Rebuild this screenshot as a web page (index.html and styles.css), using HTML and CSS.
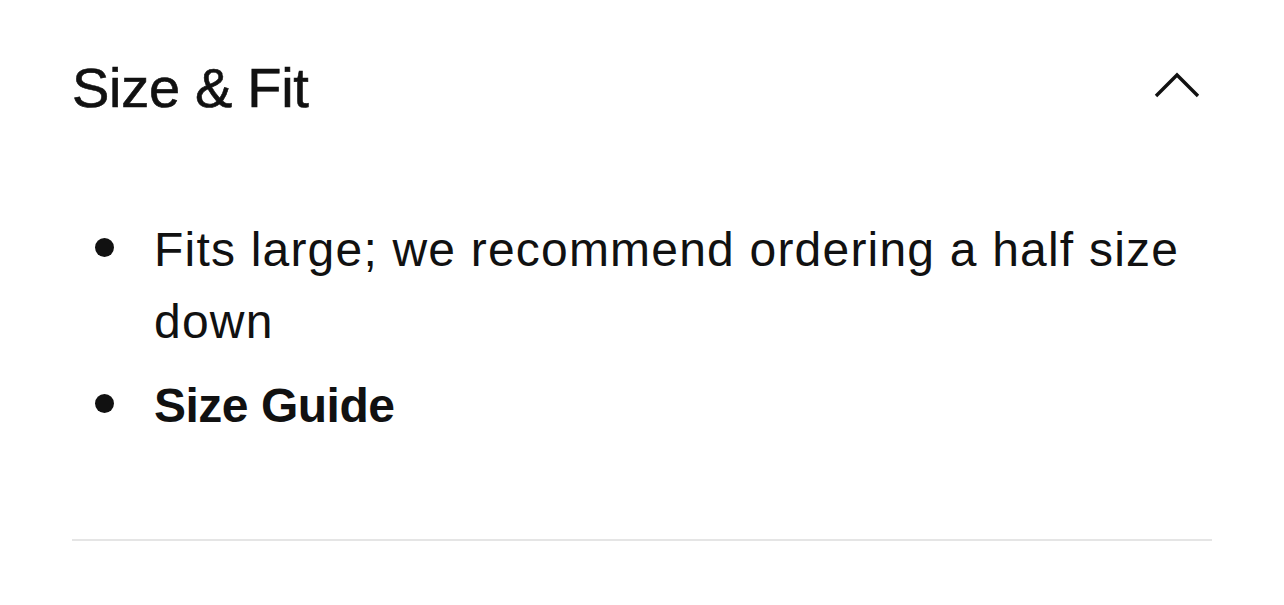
FILE: index.html
```html
<!DOCTYPE html>
<html lang="en">
<head>
    <meta charset="UTF-8">
    <title>Size &amp; Fit</title>
    <link rel="stylesheet" href="styles.css">
</head>
<body>

    <!-- Size & Fit accordion -->
    <div class="panel">
        <div class="panel-header">
            <h2>Size &amp; Fit</h2>
            <button class="toggle" aria-label="Collapse">
                <svg width="46" height="26" viewBox="0 0 46 26">
                    <path d="M2 24 L23 3 L44 24" fill="none" stroke="#111" stroke-width="3.4"/>
                </svg>
            </button>
        </div>

        <ul class="fit-list">
            <li><span class="dot"></span><span>Fits large; we recommend ordering a half size down</span></li>
            <li><span class="dot"></span><a href="#" class="guide">Size Guide</a></li>
        </ul>
    </div>

</body>
</html>
```

FILE: styles.css
```css
body {
    font-family: 'Liberation Sans', Arial, sans-serif;
    background-color: #fff;
    color: #111;
    margin: 0;
    padding: 0;
}

.panel {
    margin: 0 72px;
    padding-top: 60px;
    border-bottom: 2px solid #e5e5e5;
}

.panel-header {
    display: flex;
    justify-content: space-between;
    align-items: center;
}

h2 {
    margin: 0;
    font-size: 56px;
    font-weight: normal;
    line-height: 56px;
    letter-spacing: -0.3px;
    -webkit-text-stroke: 0.6px #111; /* a little heavier, like a medium cut */
}

.toggle {
    background: none;
    border: none;
    padding: 0;
    margin: 0 12px 6px 0;
    cursor: pointer;
    display: flex;
}

.fit-list {
    list-style: none;
    margin: 98px 0 0;
    padding: 0 0 97px;
}

.fit-list li {
    display: flex;
    font-size: 48px;
    line-height: 72px;
    letter-spacing: 1.2px;
}

.fit-list li + li {
    margin-top: 12px;
}

.dot {
    flex: none;
    width: 19px;
    height: 19px;
    border-radius: 50%;
    background-color: #111;
    margin: 24px 40px 0 23px;
}

.guide {
    color: #111;
    font-weight: bold;
    text-decoration: none;
    letter-spacing: -0.5px;
}
```
